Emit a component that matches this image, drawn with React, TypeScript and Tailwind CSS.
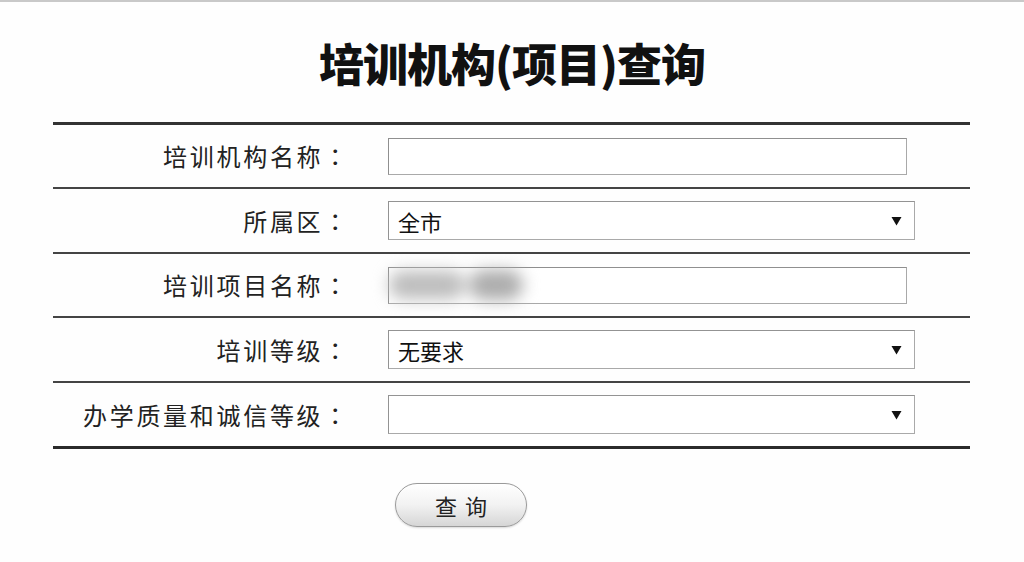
import React from "react";

const Arrow = () => (
  <svg width="11" height="10" viewBox="0 0 11 10" className="shrink-0">
    <path d="M0.5 1 L10.5 1 L5.5 9.5 Z" fill="#111" />
  </svg>
);

const Label = ({ text }: { text: string }) => (
  <div className="w-[297px] shrink-0 text-right text-[24px] leading-none tracking-[2.7px] text-[#222]">
    {text}
    <span className="font-['Noto_Sans_CJK_TC',sans-serif]">：</span>
  </div>
);

const TextInput = ({ blur }: { blur?: boolean }) => (
  <div className="relative w-[519px] h-[37px] border border-[#a9a9a9] border-t-[#8f8f8f] border-l-[#8f8f8f] bg-white">
    {blur && (
      <div className="absolute left-[-12px] top-[-9px] w-[170px] h-[52px] blur-[8px] flex items-center gap-[4px] px-[12px]">
        <div className="w-[76px] h-[28px] rounded-full bg-[#bdbdbd]" />
        <div className="w-[54px] h-[30px] rounded-full bg-[#adadad]" />
      </div>
    )}
  </div>
);

const Select = ({ value }: { value: string }) => (
  <div className="w-[527px] h-[39px] border border-[#a9a9a9] border-t-[#939393] border-l-[#939393] bg-white flex items-center justify-between pl-[9px] pr-[12px] text-[22px] text-[#111]">
    <span className="leading-none">{value}</span>
    <Arrow />
  </div>
);

export default function App() {
  const rows: { label: string; field: React.ReactNode; h: string }[] = [
    { label: "培训机构名称", field: <TextInput />, h: "h-[64px]" },
    { label: "所属区", field: <Select value="全市" />, h: "h-[65px]" },
    { label: "培训项目名称", field: <TextInput blur />, h: "h-[64px]" },
    { label: "培训等级", field: <Select value="无要求" />, h: "h-[65px]" },
    { label: "办学质量和诚信等级", field: <Select value="" />, h: "h-[66px]" },
  ];
  return (
    <div className="w-[1024px] h-[562px] bg-[#fefefe] border-t-[2px] border-[#c9c9c9] font-['Noto_Sans_CJK_SC',sans-serif] overflow-hidden">
      <div className="pt-[38px] h-[88px] flex justify-center">
        <h1 className="text-[45px] leading-none font-black text-[#111] tracking-[-1px]">
          培训机构(项目)查询
        </h1>
      </div>
      <div className="ml-[53px] mt-[32px] w-[917px] border-t-[3px] border-[#333]">
        {rows.map((r, i) => (
          <div
            key={i}
            className={`${r.h} flex items-center gap-[38px] ${i === rows.length - 1 ? "border-b-[3px] border-[#2a2a2a]" : "border-b-[2px] border-[#444]"}`}
          >
            <Label text={r.label} />
            {r.field}
          </div>
        ))}
      </div>
      <div className="pl-[395px] mt-[34px]">
        <button className="w-[132px] h-[44px] rounded-full border border-[#9a9a9a] bg-gradient-to-b from-[#ffffff] via-[#f2f2f2] to-[#d6d6d6] shadow-[inset_0_1px_1px_rgba(255,255,255,0.9),0_1px_2px_rgba(0,0,0,0.15)] text-[22px] text-[#222] leading-none tracking-[8px] pl-[8px]">
          查询
        </button>
      </div>
    </div>
  );
}
